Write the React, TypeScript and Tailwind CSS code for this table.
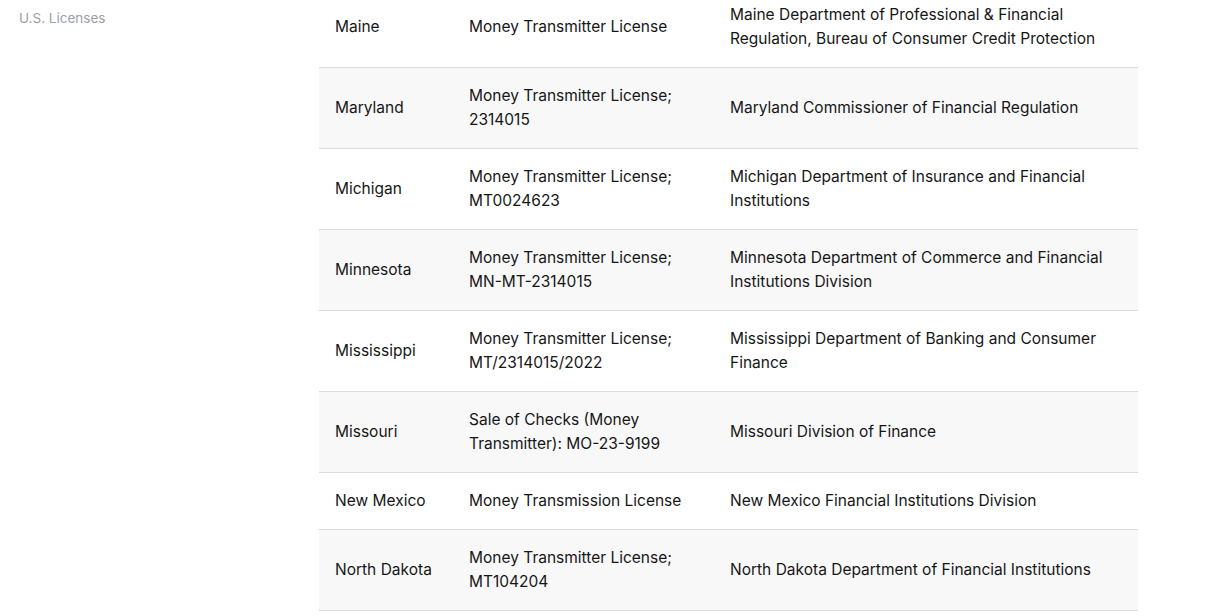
const rows = [
  {
    state: 'Maine',
    license: 'Money Transmitter License',
    regulator: 'Maine Department of Professional & Financial Regulation, Bureau of Consumer Credit Protection',
  },
  { state: 'Maryland', license: 'Money Transmitter License; 2314015', regulator: 'Maryland Commissioner of Financial Regulation' },
  {
    state: 'Michigan',
    license: 'Money Transmitter License; MT0024623',
    regulator: 'Michigan Department of Insurance and Financial Institutions',
  },
  {
    state: 'Minnesota',
    license: 'Money Transmitter License; MN-MT-2314015',
    regulator: 'Minnesota Department of Commerce and Financial Institutions Division',
  },
  {
    state: 'Mississippi',
    license: 'Money Transmitter License; MT/2314015/2022',
    regulator: 'Mississippi Department of Banking and Consumer Finance',
  },
  { state: 'Missouri', license: 'Sale of Checks (Money Transmitter): MO-23-9199', regulator: 'Missouri Division of Finance' },
  { state: 'New Mexico', license: 'Money Transmission License', regulator: 'New Mexico Financial Institutions Division' },
  {
    state: 'North Dakota',
    license: 'Money Transmitter License; MT104204',
    regulator: 'North Dakota Department of Financial Institutions',
  },
];

export default function App() {
  return (
    <div className="h-[616px] w-[1222px] overflow-hidden bg-white font-['Inter',sans-serif] text-[#161616]">
      <div className="flex">
        <aside className="w-[319px] shrink-0 pl-[19px] pt-[9px]">
          <p className="text-[13.5px] leading-[18px] text-[#9aa0a6]">U.S. Licenses</p>
        </aside>

        <table className="-mt-[13px] w-[819px] table-fixed border-collapse text-[15.5px] leading-[24px]">
          <colgroup>
            <col className="w-[134px]" />
            <col className="w-[261px]" />
            <col className="w-[424px]" />
          </colgroup>
          <tbody>
            {rows.map((row, i) => (
              <tr key={row.state} className={`border-b border-[#dcdcdc] ${i % 2 === 1 ? 'bg-[#f8f8f8]' : 'bg-white'}`}>
                <td className="px-4 py-4 align-middle">{row.state}</td>
                <td className="px-4 py-4 align-middle">{row.license}</td>
                <td className="px-4 py-4 align-middle">{row.regulator}</td>
              </tr>
            ))}
          </tbody>
        </table>
      </div>
    </div>
  );
}
